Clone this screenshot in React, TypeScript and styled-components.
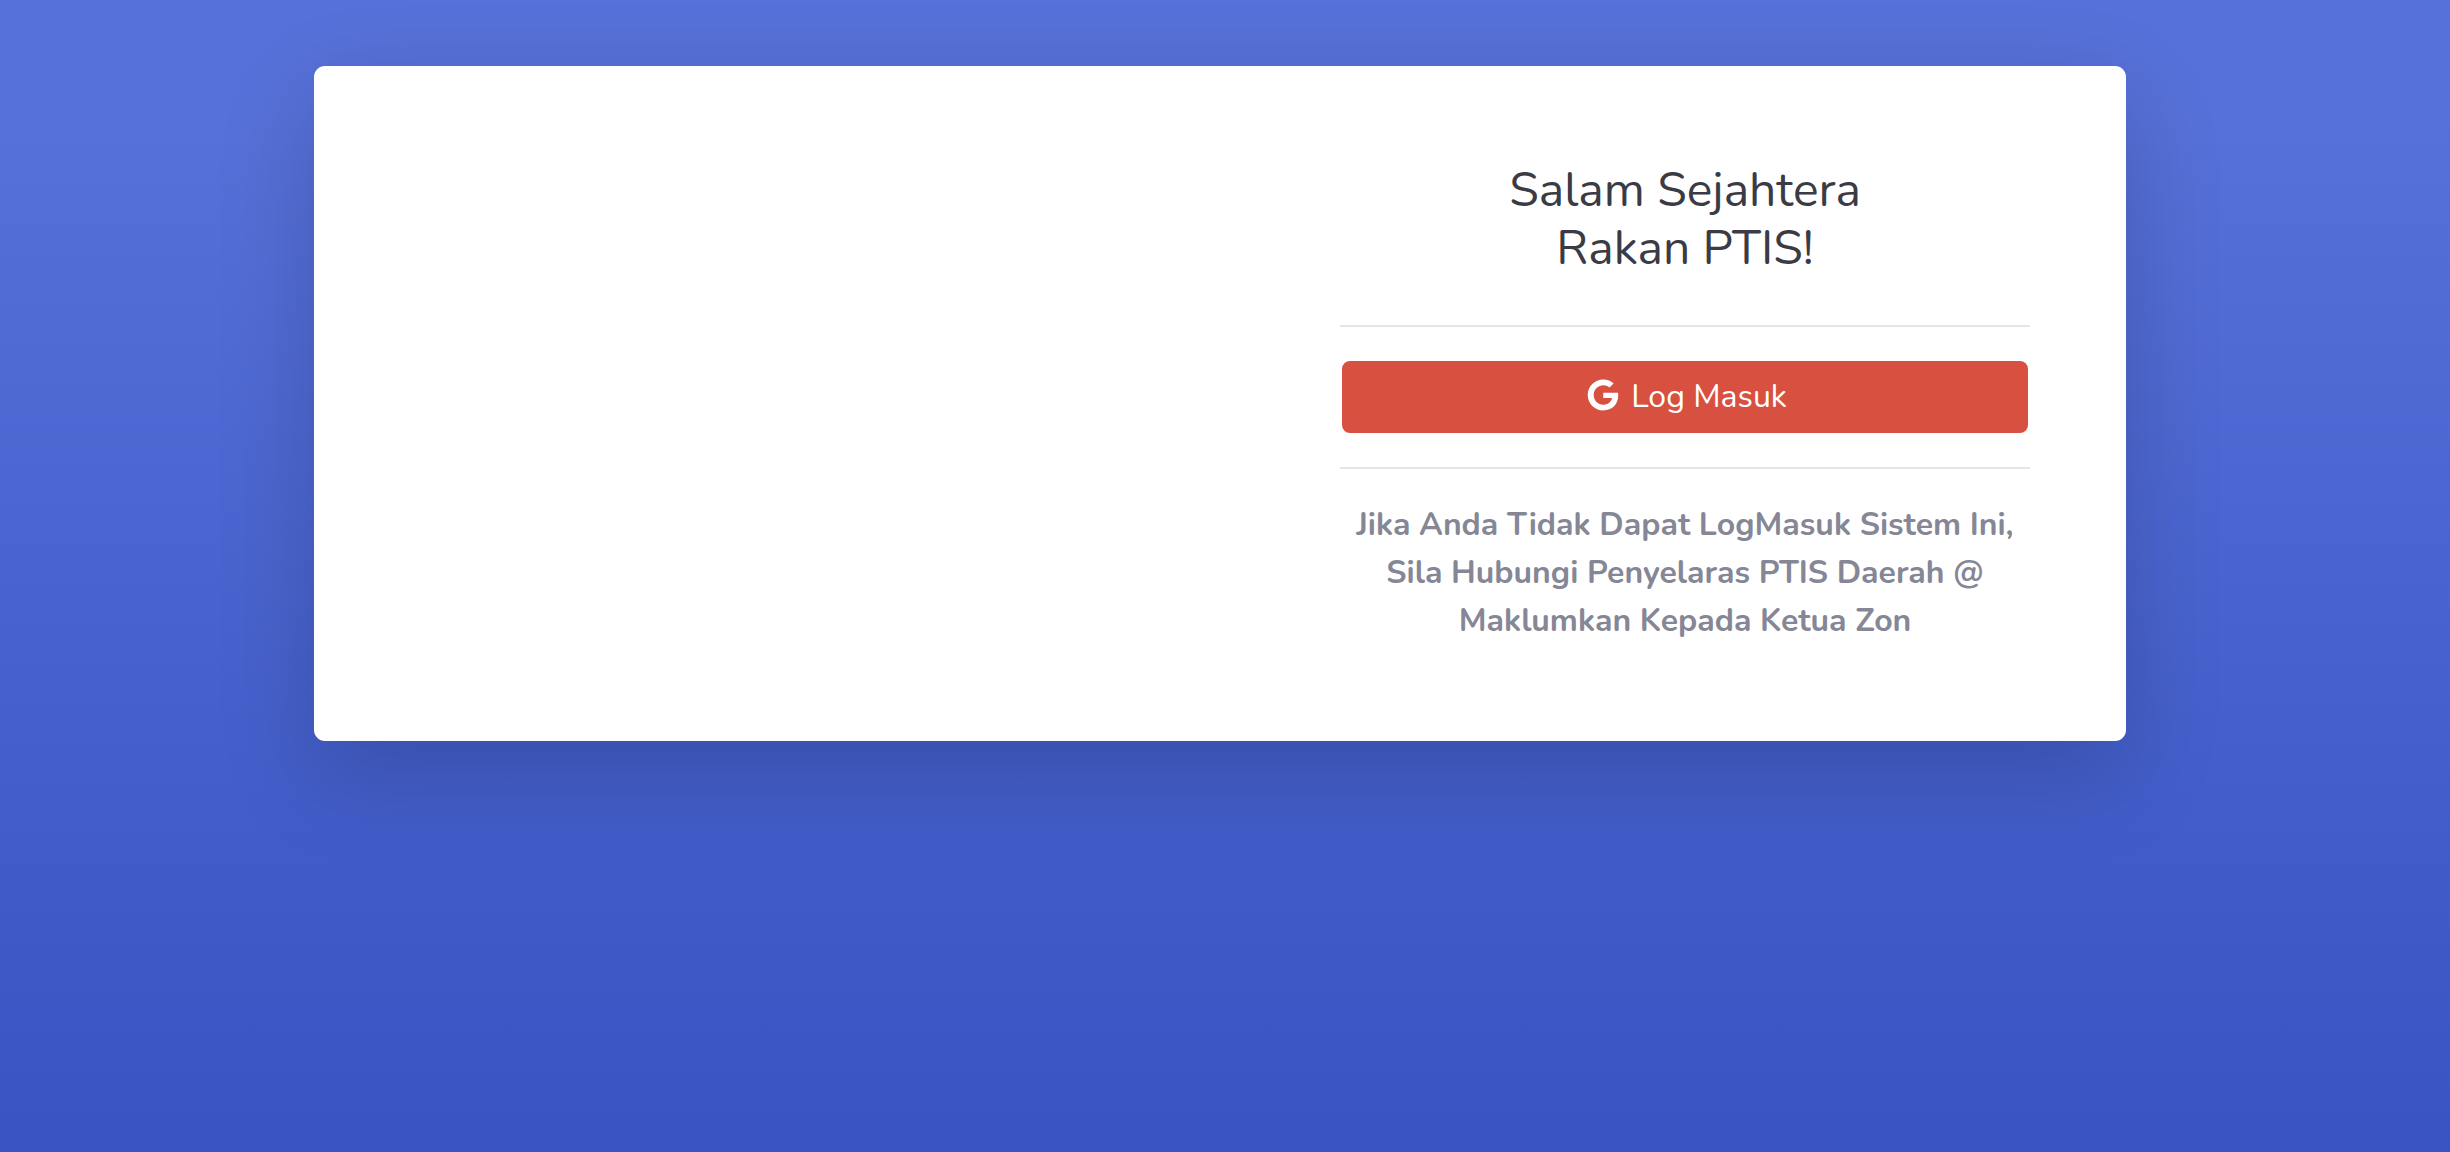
import React from "react";
import styled, { createGlobalStyle } from "styled-components";
import { FaGoogle } from "react-icons/fa";

const GlobalStyle = createGlobalStyle`
  *, *::before, *::after { box-sizing: border-box; }
  html { height: 100%; }
  body {
    margin: 0;
    min-height: 100%;
    font-family: Nunito, "Open Sans", "Noto Sans", sans-serif;
    color: #858796;
    background: #3854c2 linear-gradient(180deg, #5671d9 10%, #3854c2 100%) no-repeat;
  }
`;

const Page = styled.div`
  padding: 66px 34px 66px 24px;
`;

const Card = styled.main`
  display: grid;
  grid-template-columns: 930fr 882fr;
  max-width: 1812px;
  margin: 0 auto;
  background: #fff;
  border-radius: 11px;
  box-shadow: 0 32px 96px rgba(0, 0, 0, 0.176);
`;

const Panel = styled.section`
  grid-column: 2;
  padding: 96px;
  text-align: center;
`;

const Title = styled.h1`
  margin: 0 0 48px;
  font-size: 48px;
  font-weight: 400;
  line-height: 1.2;
  color: #3a3b45;
`;

const Rule = styled.hr`
  margin: 32px 0;
  border: 0;
  border-top: 2px solid rgba(0, 0, 0, 0.1);
`;

const LoginButton = styled.button`
  display: flex;
  align-items: center;
  justify-content: center;
  gap: 8px;
  width: 100%;
  height: 76px;
  padding: 0 16px;
  border: 2px solid #fff;
  border-radius: 10px;
  background: #d85040;
  color: #fff;
  font: inherit;
  font-size: 32px;
  line-height: 48px;
  cursor: pointer;
`;

const GoogleIcon = styled(FaGoogle)`
  width: 40px;
  height: 32px;
  margin-bottom: 4px;
`;

const Help = styled.p`
  margin: 0;
  font-size: 32px;
  font-weight: 700;
  line-height: 48px;
`;

export default function App() {
  return (
    <>
      <GlobalStyle />
      <Page>
        <Card>
          <Panel>
            <Title>
              Salam Sejahtera
              <br />
              Rakan PTIS!
            </Title>
            <Rule />
            <LoginButton type="button">
              <GoogleIcon aria-hidden />
              Log Masuk
            </LoginButton>
            <Rule />
            <Help>
              Jika Anda Tidak Dapat LogMasuk Sistem Ini,
              <br />
              Sila Hubungi Penyelaras PTIS Daerah @
              <br />
              Maklumkan Kepada Ketua Zon
            </Help>
          </Panel>
        </Card>
      </Page>
    </>
  );
}
